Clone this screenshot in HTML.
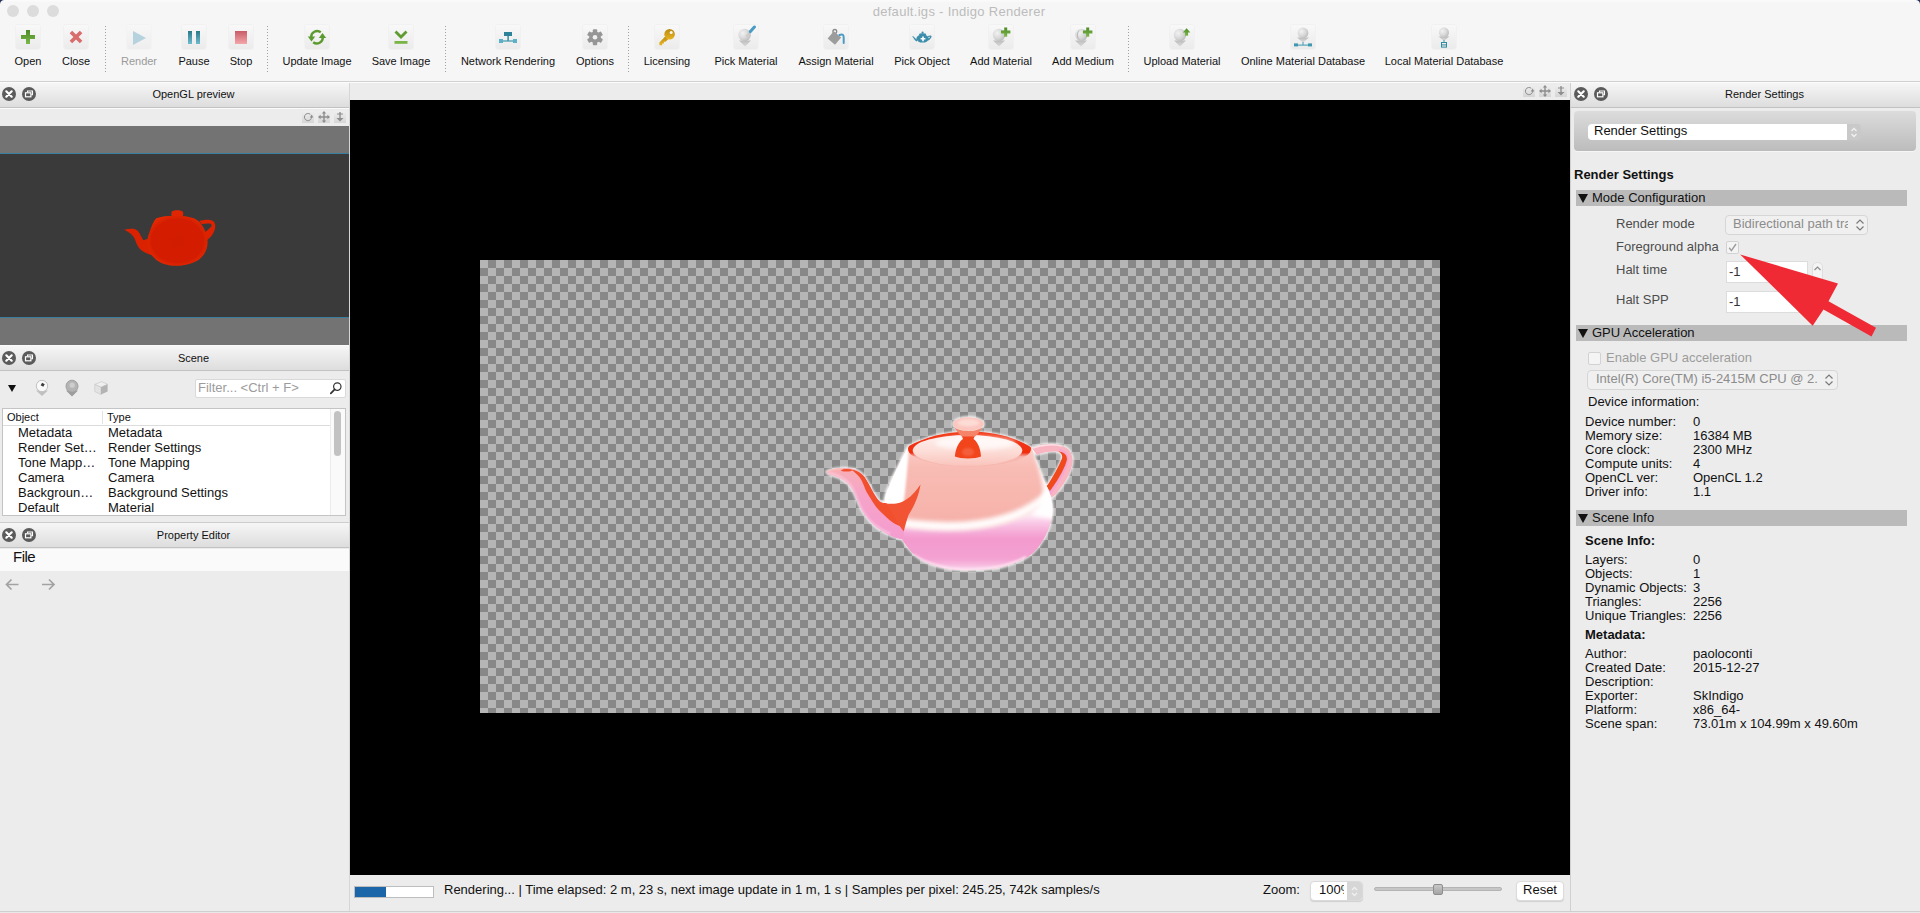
<!DOCTYPE html>
<html lang="en">
<head>
<meta charset="utf-8">
<title>default.igs - Indigo Renderer</title>
<style>
*{box-sizing:border-box;margin:0;padding:0}
html,body{width:1920px;height:913px;overflow:hidden;background:#ececec}
body{position:relative;font-family:"Liberation Sans",sans-serif;font-size:13px;color:#111;-webkit-font-smoothing:antialiased}
.a{position:absolute}
.t{position:absolute;white-space:nowrap;line-height:16px}
.c{text-align:center}
/* toolbar */
#tb{left:0;top:0;width:1920px;height:81px;background:#f6f6f6}
#tbline{left:0;top:81px;width:1920px;height:1px;background:#d1d1d1}
#tbline2{left:0;top:82px;width:1920px;height:1px;background:#fbfbfb}
.tl{position:absolute;top:53px;height:16px;line-height:16px;font-size:11px;text-align:center;white-space:nowrap;color:#111}
.sep{position:absolute;top:26px;height:46px;width:1px;background:repeating-linear-gradient(#a2a2a2 0 1px,transparent 1px 3px)}
.ib{position:absolute;top:25px;width:24px;height:24px;border-radius:2px;background:linear-gradient(#f8f8f8,#ebebeb);box-shadow:0 0 0 1px rgba(0,0,0,0.02)}
.ib svg{position:absolute;left:0;top:0}
/* dock titles */
.dt{position:absolute;height:25px;background:linear-gradient(#f6f6f6,#dddddd);border-bottom:1px solid #c2c2c2;font-size:11px;line-height:22px;text-align:center;color:#111}
.db{position:absolute;width:14px;height:14px;border-radius:7px;background:#5b5b5b}
.secbar{position:absolute;left:1576px;width:331px;height:16px;background:#bababa}
.secbar span{position:absolute;left:16px;top:0;line-height:15px;font-size:13px;color:#111;white-space:nowrap}
.secbar i{position:absolute;left:2px;top:4px;width:0;height:0;border-left:5.5px solid transparent;border-right:5.5px solid transparent;border-top:9px solid #111}
.k{position:absolute;left:1585px;white-space:nowrap;font-size:13px;line-height:14px;color:#111}
.v{position:absolute;left:1693px;white-space:nowrap;font-size:13px;line-height:14px;color:#111}
.lb{position:absolute;left:1616px;white-space:nowrap;font-size:13px;line-height:16px;color:#4c4c4c}
.row{position:absolute;left:18px;font-size:13px;line-height:15px;white-space:nowrap;color:#111}
.row2{position:absolute;left:108px;font-size:13px;line-height:15px;white-space:nowrap;color:#111}
</style>
</head>
<body>
<!-- ===== TITLE + TOOLBAR ===== -->
<div id="tb" class="a"></div>
<div id="tbline" class="a"></div>
<div id="tbline2" class="a"></div>
<div class="a" style="left:0;top:0;width:1920px;height:3px;background:linear-gradient(#fbfbfb,#f6f6f6)"></div>
<div class="a" style="left:0;top:0;width:4px;height:4px;background:radial-gradient(circle at 100% 100%,rgba(34,46,88,0) 3.400px,#222e58 4.400px)"></div>
<div class="a" style="left:1916px;top:0;width:4px;height:4px;background:radial-gradient(circle at 0 100%,rgba(34,46,88,0) 3.400px,#222e58 4.400px)"></div>
<div class="a" style="left:7px;top:5px;width:12px;height:12px;border-radius:6px;background:#dcdcdc"></div>
<div class="a" style="left:27px;top:5px;width:12px;height:12px;border-radius:6px;background:#dcdcdc"></div>
<div class="a" style="left:47px;top:5px;width:12px;height:12px;border-radius:6px;background:#dcdcdc"></div>
<div class="t c" style="left:759px;top:4px;width:400px;font-size:13px;color:#bcbcbc;letter-spacing:0.3px">default.igs - Indigo Renderer</div>
<!--TB-START-->
<svg width="0" height="0" style="position:absolute">
<defs>
<linearGradient id="gG" x1="0" y1="0" x2="0" y2="1"><stop offset="0" stop-color="#4c8a26"/><stop offset="1" stop-color="#7cb84a"/></linearGradient>
<linearGradient id="gT" x1="0" y1="0" x2="0" y2="1"><stop offset="0" stop-color="#2a7888"/><stop offset="1" stop-color="#70bcd0"/></linearGradient>
<linearGradient id="gR" x1="0" y1="0" x2="0" y2="1"><stop offset="0" stop-color="#c85c66"/><stop offset="1" stop-color="#f4a6aa"/></linearGradient>
<linearGradient id="gY" x1="0" y1="0" x2="0" y2="1"><stop offset="0" stop-color="#b98a10"/><stop offset="1" stop-color="#e8b422"/></linearGradient>
<radialGradient id="gS" cx="0.35" cy="0.35" r="0.75"><stop offset="0" stop-color="#f2f2f2"/><stop offset="0.55" stop-color="#d8d8d8"/><stop offset="1" stop-color="#b8b8b8"/></radialGradient>
<linearGradient id="gP" x1="0" y1="0" x2="0" y2="1"><stop offset="0" stop-color="#b4b4b4"/><stop offset="1" stop-color="#dadada"/></linearGradient>
</defs>
</svg>
<div class="ib" style="left:16px"><svg width="24" height="24" viewBox="0 0 24 24"><path d="M10 5h4v5h5v4h-5v5h-4v-5H5v-4h5z" fill="url(#gG)"/></svg></div>
<div class="tl" style="left:-52px;width:160px">Open</div>
<div class="ib" style="left:64px"><svg width="24" height="24" viewBox="0 0 24 24"><path d="M10.2 4.8h3.6v5.4h5.4v3.6h-5.4v5.4h-3.6v-5.4H4.800v-3.600h5.400z" fill="#d96c6c" transform="rotate(45 12 12)"/></svg></div>
<div class="tl" style="left:-4px;width:160px">Close</div>
<div class="sep" style="left:105px"></div>
<div class="ib" style="left:127px;opacity:.7"><svg width="24" height="24" viewBox="0 0 24 24"><path d="M6 6L19 13L6 20z" fill="#9cc4d4"/></svg></div>
<div class="tl" style="left:59px;width:160px;color:#9a9a9a">Render</div>
<div class="ib" style="left:182px"><svg width="24" height="24" viewBox="0 0 24 24"><rect x="6" y="6" width="4" height="13" fill="url(#gT)"/><rect x="14" y="6" width="4" height="13" fill="url(#gT)"/></svg></div>
<div class="tl" style="left:114px;width:160px">Pause</div>
<div class="ib" style="left:229px"><svg width="24" height="24" viewBox="0 0 24 24"><rect x="6" y="6" width="12" height="13" fill="url(#gR)"/></svg></div>
<div class="tl" style="left:161px;width:160px">Stop</div>
<div class="sep" style="left:267px"></div>
<div class="ib" style="left:305px"><svg width="24" height="24" viewBox="0 0 24 24"><g fill="none" stroke="#5a9a2e" stroke-width="2.4"><path d="M6.200 12.500A6 6 0 0 1 15.800 7.300"/><path d="M17.800 12A6 6 0 0 1 8.200 17.200"/></g><path d="M2.800 11.500h7.400l-3.700 5z" fill="#5a9a2e"/><path d="M13.800 13l3.700-5l3.700 5z" fill="#5a9a2e"/></svg></div>
<div class="tl" style="left:237px;width:160px">Update Image</div>
<div class="ib" style="left:389px"><svg width="24" height="24" viewBox="0 0 24 24"><path d="M5.500 7.500l2-2 4.500 4.500 4.500-4.500 2 2-6.500 6.500z" fill="#5e9c30"/><rect x="5.500" y="16" width="13" height="2.800" fill="#78b446"/></svg></div>
<div class="tl" style="left:321px;width:160px">Save Image</div>
<div class="sep" style="left:445px"></div>
<div class="ib" style="left:496px"><svg width="24" height="24" viewBox="0 0 24 24"><rect x="8" y="7" width="8" height="4" fill="#2b8299"/><rect x="11.400" y="11" width="1.400" height="5" fill="#2b8299"/><rect x="5" y="15.400" width="14" height="1.200" fill="#3f98b0"/><rect x="3" y="14" width="4" height="4" fill="#5cb0c8"/><rect x="17" y="14" width="4" height="4" fill="#5cb0c8"/></svg></div>
<div class="tl" style="left:428px;width:160px">Network Rendering</div>
<div class="ib" style="left:583px"><svg width="24" height="24" viewBox="0 0 24 24"><g transform="translate(12 12.200)"><g fill="#969696"><circle r="5.800"/><rect x="-2.200" y="-8" width="4.400" height="16" rx="1"/><rect x="-2.200" y="-8" width="4.400" height="16" rx="1" transform="rotate(60)"/><rect x="-2.200" y="-8" width="4.400" height="16" rx="1" transform="rotate(120)"/></g><circle r="2.300" fill="#f1f1f1"/></g></svg></div>
<div class="tl" style="left:515px;width:160px">Options</div>
<div class="sep" style="left:628px"></div>
<div class="ib" style="left:655px"><svg width="24" height="24" viewBox="0 0 24 24"><path d="M11.200 10.600L4.400 17.400v2.800h2.800v-1.700h1.700v-1.700h1.700l2.600-2.600z" fill="url(#gY)"/><circle cx="14.600" cy="9.300" r="5.300" fill="url(#gY)"/><circle cx="16.200" cy="7.600" r="1.500" fill="#f4f4f4"/></svg></div>
<div class="tl" style="left:587px;width:160px">Licensing</div>
<div class="ib" style="left:734px"><svg width="24" height="24" viewBox="0 0 24 24"><path d="M5 15.500h4v-2h4v2h4l-6 6z" fill="url(#gP)"/><circle cx="10.600" cy="10" r="6.200" fill="url(#gS)"/><path d="M12.200 11.600l5.400-6.600" stroke="#c9c9c9" stroke-width="1.600" fill="none"/><path d="M16.400 6.600l4-4.600" stroke="#4a9cc4" stroke-width="3" stroke-linecap="round" fill="none"/></svg></div>
<div class="tl" style="left:666px;width:160px">Pick Material</div>
<div class="ib" style="left:824px"><svg width="24" height="24" viewBox="0 0 24 24"><circle cx="10.800" cy="6.400" r="1.900" fill="none" stroke="#8a8a8a" stroke-width="1.300"/><rect x="5.600" y="8.200" width="9.600" height="9.600" fill="#9c9c9c" transform="rotate(40 10.400 13)"/><path d="M15.500 10c3-1.500 4.300 0 4.200 3v5" stroke="#4a9cc4" stroke-width="2" fill="none" stroke-linecap="round"/></svg></div>
<div class="tl" style="left:756px;width:160px">Assign Material</div>
<div class="ib" style="left:910px"><svg width="24" height="24" viewBox="0 0 24 24"><g fill="#3c8eac"><ellipse cx="12.600" cy="13.600" rx="6.200" ry="4"/><ellipse cx="12.600" cy="9.600" rx="3.600" ry="1.400"/><circle cx="12.600" cy="7.600" r="1.100"/><path d="M7 14.500c-2-.5-2.500-3-4.300-3.400l-.3 1c1.600.6 1.600 3.600 4.600 4.400z"/></g><path d="M18 11.500c2.500-.8 3.500-.5 2.600.9-.8 1.300-2 2.400-3 2.600" fill="none" stroke="#3c8eac" stroke-width="1.300"/><path d="M12.200 11.400h1.600v1.600h1.600v1.600h-1.600v1.600h-1.600v-1.600h-1.600v-1.600h1.600z" fill="#fff"/></svg></div>
<div class="tl" style="left:842px;width:160px">Pick Object</div>
<div class="ib" style="left:989px"><svg width="24" height="24" viewBox="0 0 24 24"><path d="M4 15.500h4v-2h4v2h4l-6 6z" fill="url(#gP)"/><circle cx="10" cy="10" r="6.200" fill="url(#gS)"/><path d="M15.200 2.400h3v3.200h3.200v3h-3.200v3.200h-3V8.600H12v-3h3.200z" fill="url(#gG)"/></svg></div>
<div class="tl" style="left:921px;width:160px">Add Material</div>
<div class="ib" style="left:1071px"><svg width="24" height="24" viewBox="0 0 24 24"><path d="M4 15.500h4v-2h4v2h4l-6 6z" fill="url(#gP)"/><circle cx="10.400" cy="10" r="6.200" fill="url(#gS)"/><path d="M9 5a5.500 5.500 0 0 0 0 10a7 7 0 0 1 0-10z" fill="#aaa" opacity=".7"/><path d="M15.200 2.400h3v3.200h3.200v3h-3.200v3.200h-3V8.600H12v-3h3.200z" fill="url(#gG)"/></svg></div>
<div class="tl" style="left:1003px;width:160px">Add Medium</div>
<div class="sep" style="left:1128px"></div>
<div class="ib" style="left:1170px"><svg width="24" height="24" viewBox="0 0 24 24"><path d="M4 15.500h4v-2h4v2h4l-6 6z" fill="url(#gP)"/><circle cx="10" cy="10" r="6.200" fill="url(#gS)"/><path d="M16.600 3.200l3.800 4.200h-2.300v3.400h-3V7.400h-2.300z" fill="url(#gG)"/></svg></div>
<div class="tl" style="left:1102px;width:160px">Upload Material</div>
<div class="ib" style="left:1291px"><svg width="24" height="24" viewBox="0 0 24 24"><path d="M6 12.500h4v-1.500h4v1.500h4l-6 5z" fill="url(#gP)"/><circle cx="12" cy="8" r="5.400" fill="url(#gS)"/><rect x="4" y="19.600" width="16" height="1" fill="#3f98b0"/><rect x="11.500" y="17" width="1" height="3" fill="#3f98b0"/><rect x="3" y="18.400" width="4" height="3" fill="#3f98b0"/><rect x="17" y="18.400" width="4" height="3" fill="#3f98b0"/></svg></div>
<div class="tl" style="left:1223px;width:160px">Online Material Database</div>
<div class="ib" style="left:1432px"><svg width="24" height="24" viewBox="0 0 24 24"><path d="M6.500 11.500h4v-1.500h3v1.500h4l-5.500 4.500z" fill="url(#gP)"/><circle cx="12" cy="7.600" r="5" fill="url(#gS)"/><rect x="11.500" y="15" width="1" height="3" fill="#3f98b0"/><rect x="9.500" y="17.500" width="5" height="4.600" fill="none" stroke="#2f8aa4" stroke-width="1"/><rect x="9.500" y="19.400" width="5" height="1" fill="#2f8aa4"/></svg></div>
<div class="tl" style="left:1364px;width:160px">Local Material Database</div>
<!--TB-END-->
<!-- ===== LEFT DOCK ===== -->
<!--LEFT-START-->
<!-- dock title: OpenGL preview -->
<div class="dt" style="left:0;top:83px;width:349px;padding-left:38px">OpenGL preview</div>
<div class="a" style="left:0;top:108px;width:349px;height:1px;background:#fafafa"></div>
<div class="db" style="left:2px;top:87px"><svg width="14" height="14" viewBox="0 0 14 14" class="a" style="left:0;top:0"><path d="M4.300 4.300l5.400 5.400M9.700 4.300l-5.400 5.400" stroke="#fff" stroke-width="2.200" stroke-linecap="round"/></svg></div>
<div class="db" style="left:22px;top:87px"><svg width="14" height="14" viewBox="0 0 14 14" class="a" style="left:0;top:0"><path d="M5.500 5.300V4h5v3.600H9.400" fill="none" stroke="#fff" stroke-width="1.100"/><rect x="3.500" y="5.800" width="5.400" height="4" fill="none" stroke="#fff" stroke-width="1.200"/></svg></div>
<!-- small view icons -->
<div class="a" style="left:302px;top:111px;width:12px;height:12px;background:linear-gradient(#efefef,#d6d6d6)"><svg width="12" height="12" viewBox="0 0 12 12" class="a" style="left:0;top:0"><path d="M8.300 3.300A3.600 3.600 0 1 0 9.600 6" fill="none" stroke="#8e8e8e" stroke-width="1"/><path d="M7.800 6.400h3.600l-1.800-2.800z" fill="#8e8e8e"/></svg></div>
<div class="a" style="left:318px;top:111px;width:12px;height:12px;background:linear-gradient(#efefef,#d6d6d6)"><svg width="12" height="12" viewBox="0 0 12 12" class="a" style="left:0;top:0"><path d="M6 0l2.200 2.600H6.700v2.700h2.700V3.800L12 6 9.400 8.200V6.700H6.700v2.700h1.500L6 12 3.800 9.400h1.500V6.700H2.600v1.500L0 6l2.600-2.200v1.500h2.700V2.600H3.800z" fill="#8e8e8e"/></svg></div>
<div class="a" style="left:334px;top:111px;width:12px;height:12px;background:linear-gradient(#efefef,#d6d6d6)"><svg width="12" height="12" viewBox="0 0 12 12" class="a" style="left:0;top:0"><path d="M3 2.600h6v1H3zM5.300 1h1.400v6h2.800L6 10.600 2.500 7h2.800z" fill="#8e8e8e"/></svg></div>
<!-- GL view -->
<div class="a" style="left:0;top:126px;width:349px;height:219px;background:#737373"></div>
<div class="a" style="left:0;top:153px;width:349px;height:165px;background:#3a3a3a;border-top:1px solid #3b7f9f;border-bottom:1px solid #3b7f9f"></div>
<svg class="a" style="left:110px;top:195px" width="130" height="90" viewBox="110 195 130 90">
<defs><radialGradient id="rt" cx="0.5" cy="0.5" r="0.55"><stop offset="0" stop-color="#d21e00"/><stop offset="0.8" stop-color="#d41f00"/><stop offset="1" stop-color="#ea2a04"/></radialGradient><filter id="gb" x="-10%" y="-10%" width="120%" height="120%"><feGaussianBlur stdDeviation="0.45"/></filter></defs>
<g filter="url(#gb)">
<path d="M124.300 229.700C128 228.700 131.500 228.500 134.600 229C137 230 138.500 231.500 139.600 233.400C141 236 142.300 238.500 143.500 240.300L150 238L153 256C152.500 255.800 152 255.500 151.400 255.100C149 254.300 146.500 253.400 144.500 252.200C142 250.800 140 249.300 138.600 247.200C136.800 244.500 135.800 241.500 134.600 238.400C133.300 236 131.800 234.300 129.700 232.900C128 231.600 126 230.500 124.300 229.700Z" fill="#da2200"/>
<path d="M199.200 221.100C202 220.200 205.500 219.600 208.600 219.800C210.800 220 212.500 220.600 213.500 221.600C214.800 223 215.400 224.600 215.300 226.500C215 229.500 214 232 212.500 234.400C211 236.500 209.400 238 207.600 239.400L205.500 244L203.500 233.500L205.100 232C207.500 230.200 209.800 228.300 211.500 226.500C212 225.200 211.300 224 210 223.600C207.300 223.200 204.500 223.500 201.700 224.100Z" fill="#de2400"/>
<path d="M156.300 218.200C161 216.500 167 215.700 175 215.700C183 215.700 189 216.500 193.800 218.200C196.500 219.500 199 221.300 200.700 223.600C203 226.500 204.600 229.500 205.600 232.500C206.800 235.800 207.500 239 207.600 242.300C207.600 246.300 206.500 250 204.600 253.200C202.700 256.300 200 259 196.700 261C193 263 189 264.300 184.900 265C181 265.700 177 266 173.100 265.800C169 265.500 165 264.500 161.300 263C157.800 261.300 154.700 259 152.400 256.100C149 252 147.300 246 147.500 240.300C147.700 237.500 148.300 235 149.400 232.500C150.300 229.800 151.200 227.200 152.400 224.600C153.300 222.200 154.600 220 156.300 218.200Z" fill="url(#rt)"/>
<path d="M171.600 216.300C171.400 214.500 171.300 213 171.600 212C172 210.900 174.500 210.300 177.300 210.300C180 210.300 182.600 210.900 183 212C183.300 213 183.200 214.500 183 216.300Z" fill="#e02602"/>
</g>
</svg>
<!-- dock title: Scene -->
<div class="a" style="left:0;top:345px;width:349px;height:1px;background:#fafafa"></div>
<div class="dt" style="left:0;top:346px;width:349px;padding-left:38px;line-height:24px">Scene</div>
<div class="db" style="left:2px;top:351px"><svg width="14" height="14" viewBox="0 0 14 14" class="a" style="left:0;top:0"><path d="M4.300 4.300l5.400 5.400M9.700 4.300l-5.400 5.400" stroke="#fff" stroke-width="2.200" stroke-linecap="round"/></svg></div>
<div class="db" style="left:22px;top:351px"><svg width="14" height="14" viewBox="0 0 14 14" class="a" style="left:0;top:0"><path d="M5.500 5.300V4h5v3.600H9.400" fill="none" stroke="#fff" stroke-width="1.100"/><rect x="3.500" y="5.800" width="5.400" height="4" fill="none" stroke="#fff" stroke-width="1.200"/></svg></div>
<!-- scene toolbar -->
<div class="a" style="left:8px;top:385px;width:0;height:0;border-left:4px solid transparent;border-right:4px solid transparent;border-top:7px solid #111"></div>
<svg class="a" style="left:34px;top:379px" width="16" height="18" viewBox="0 0 16 18"><path d="M2 11.500h3.500v-1h5v1H14L8 17z" fill="#c0c0c0"/><circle cx="8" cy="7" r="5.700" fill="#f9f9f9" stroke="#c2c2c2" stroke-width="1"/><rect x="7.200" y="4.200" width="3" height="3" fill="#3c3c3c" transform="rotate(30 8.700 5.700)"/></svg>
<svg class="a" style="left:64px;top:379px" width="16" height="18" viewBox="0 0 16 18"><path d="M2 11.500h3.500v-1h5v1H14L8 17.500z" fill="#9c9c9c"/><circle cx="8" cy="7.200" r="6" fill="#b4b4b4" stroke="#a0a0a0" stroke-width="1"/><circle cx="8.200" cy="6.200" r="2.600" fill="#cdcdcd"/></svg>
<svg class="a" style="left:93px;top:380px" width="16" height="16" viewBox="0 0 16 16"><path d="M1.800 4.400L8.600 1.600l6 2.600-6.600 3z" fill="#efefef" stroke="#c8c8c8" stroke-width=".7"/><path d="M1.800 4.400L8 7.200v7.400L1.800 11.600z" fill="#e2e2e2" stroke="#c8c8c8" stroke-width=".7"/><path d="M8 7.200l6.600-3v7.400L8 14.600z" fill="#b4b4b4"/></svg>
<!-- filter box -->
<div class="a" style="left:195px;top:379px;width:151px;height:19px;background:#fff;border:1px solid #d9d9d9;border-radius:2px"></div>
<div class="t" style="left:198px;top:380px;font-size:13px;color:#9c9c9c">Filter... &lt;Ctrl + F&gt;</div>
<svg class="a" style="left:329px;top:381px" width="14" height="14" viewBox="0 0 14 14"><circle cx="8.300" cy="5.600" r="3.700" fill="none" stroke="#333" stroke-width="1.200"/><path d="M5.700 8.300L1.800 12.400" stroke="#333" stroke-width="1.700" stroke-linecap="round"/></svg>
<!-- tree -->
<div class="a" style="left:2px;top:408px;width:344px;height:108px;background:#fff;border:1px solid #c4c4c4"></div>
<div class="a" style="left:3px;top:425px;width:328px;height:1px;background:#dcdcdc"></div>
<div class="a" style="left:102px;top:411px;width:1px;height:13px;background:#e2e2e2"></div>
<div class="a" style="left:330px;top:409px;width:1px;height:106px;background:#ececec"></div>
<div class="a" style="left:331px;top:409px;width:14px;height:106px;background:#fafafa"></div>
<div class="a" style="left:334px;top:411px;width:7px;height:45px;border-radius:4px;background:#c2c2c2"></div>
<div class="t" style="left:7px;top:409px;font-size:11px">Object</div>
<div class="t" style="left:107px;top:409px;font-size:11px">Type</div>
<div class="row" style="top:425px">Metadata</div><div class="row2" style="top:425px">Metadata</div>
<div class="row" style="top:440px">Render Set…</div><div class="row2" style="top:440px">Render Settings</div>
<div class="row" style="top:455px">Tone Mapp…</div><div class="row2" style="top:455px">Tone Mapping</div>
<div class="row" style="top:470px">Camera</div><div class="row2" style="top:470px">Camera</div>
<div class="row" style="top:485px">Backgroun…</div><div class="row2" style="top:485px">Background Settings</div>
<div class="row" style="top:500px">Default</div><div class="row2" style="top:500px">Material</div>
<!-- dock title: Property Editor -->
<div class="a" style="left:0;top:522px;width:349px;height:1px;background:#cdcdcd"></div>
<div class="dt" style="left:0;top:523px;width:349px;padding-left:38px;line-height:24px">Property Editor</div>
<div class="db" style="left:2px;top:528px"><svg width="14" height="14" viewBox="0 0 14 14" class="a" style="left:0;top:0"><path d="M4.300 4.300l5.400 5.400M9.700 4.300l-5.400 5.400" stroke="#fff" stroke-width="2.200" stroke-linecap="round"/></svg></div>
<div class="db" style="left:22px;top:528px"><svg width="14" height="14" viewBox="0 0 14 14" class="a" style="left:0;top:0"><path d="M5.500 5.300V4h5v3.600H9.400" fill="none" stroke="#fff" stroke-width="1.100"/><rect x="3.500" y="5.800" width="5.400" height="4" fill="none" stroke="#fff" stroke-width="1.200"/></svg></div>
<div class="a" style="left:0;top:549px;width:349px;height:22px;background:#fafafa"></div>
<div class="t" style="left:13px;top:547px;font-size:15px;line-height:20px;letter-spacing:-0.5px">File</div>
<svg class="a" style="left:4px;top:577px" width="56" height="16" viewBox="0 0 56 16"><g fill="none" stroke="#a2a2a2" stroke-width="1.700"><path d="M2.500 7.500h12M7.500 2.500L2.500 7.500l5 5"/><path d="M38 7.500h12M45 2.500l5 5-5 5"/></g></svg>
<!-- dock separators -->
<div class="a" style="left:349px;top:83px;width:1px;height:830px;background:#d6d6d6"></div>
<!--LEFT-END-->
<!-- ===== CENTER ===== -->
<!--CENTER-START-->
<div class="a" style="left:350px;top:83px;width:1220px;height:17px;background:#ececec"></div>
<div class="a" style="left:350px;top:100px;width:1220px;height:775px;background:#000"></div>
<div class="a" style="left:480px;top:260px;width:960px;height:453px;background:conic-gradient(#888 25%,#b5b5b5 0 50%,#888 0 75%,#b5b5b5 0) 0 0/16px 16px"></div>
<!-- view icons -->
<div class="a" style="left:1523px;top:85px;width:12px;height:12px;background:linear-gradient(#efefef,#d6d6d6)"><svg width="12" height="12" viewBox="0 0 12 12" class="a" style="left:0;top:0"><path d="M8.300 3.300A3.600 3.600 0 1 0 9.600 6" fill="none" stroke="#8e8e8e" stroke-width="1"/><path d="M7.800 6.400h3.600l-1.800-2.800z" fill="#8e8e8e"/></svg></div>
<div class="a" style="left:1539px;top:85px;width:12px;height:12px;background:linear-gradient(#efefef,#d6d6d6)"><svg width="12" height="12" viewBox="0 0 12 12" class="a" style="left:0;top:0"><path d="M6 0l2.200 2.600H6.700v2.700h2.700V3.800L12 6 9.400 8.200V6.700H6.700v2.700h1.500L6 12 3.800 9.400h1.500V6.700H2.600v1.500L0 6l2.600-2.200v1.500h2.700V2.600H3.800z" fill="#8e8e8e"/></svg></div>
<div class="a" style="left:1555px;top:85px;width:12px;height:12px;background:linear-gradient(#efefef,#d6d6d6)"><svg width="12" height="12" viewBox="0 0 12 12" class="a" style="left:0;top:0"><path d="M3 2.600h6v1H3zM5.300 1h1.400v6h2.800L6 10.600 2.500 7h2.800z" fill="#8e8e8e"/></svg></div>
<!-- rendered teapot -->
<svg class="a" style="left:800px;top:400px" width="300" height="190" viewBox="800 400 300 190">
<defs>
<filter id="b05" x="-20%" y="-20%" width="140%" height="140%"><feGaussianBlur stdDeviation="0.6"/></filter>
<filter id="bl1" x="-20%" y="-20%" width="140%" height="140%"><feGaussianBlur stdDeviation="1.100"/></filter>
<filter id="bl2" x="-30%" y="-30%" width="160%" height="160%"><feGaussianBlur stdDeviation="2.200"/></filter>
<filter id="bl4" x="-40%" y="-40%" width="180%" height="180%"><feGaussianBlur stdDeviation="4"/></filter>
<linearGradient id="lowG" gradientUnits="userSpaceOnUse" x1="0" y1="515" x2="0" y2="571"><stop offset="0" stop-color="#fde8f4"/><stop offset="0.2" stop-color="#f8bce0"/><stop offset="0.42" stop-color="#f39ace"/><stop offset="0.8" stop-color="#f4a2d2"/><stop offset="1" stop-color="#fbd8ee"/></linearGradient><linearGradient id="upG" gradientUnits="userSpaceOnUse" x1="0" y1="440" x2="0" y2="520"><stop offset="0" stop-color="#fbd2cc"/><stop offset="0.35" stop-color="#f8bcb4"/><stop offset="1" stop-color="#f6b2aa"/></linearGradient>
<linearGradient id="rimG" x1="0" y1="0" x2="0" y2="1"><stop offset="0" stop-color="#f23a1a"/><stop offset="0.6" stop-color="#f02e10"/><stop offset="0.72" stop-color="#f7b8b0"/><stop offset="1" stop-color="#f7b8b0"/></linearGradient>
<linearGradient id="lidG" x1="0" y1="0" x2="0" y2="1"><stop offset="0" stop-color="#fef0ee"/><stop offset="0.55" stop-color="#fcdcd6"/><stop offset="1" stop-color="#f9c4bc"/></linearGradient>
<linearGradient id="spG" x1="0" y1="0" x2="0" y2="1"><stop offset="0" stop-color="#f8b0b4"/><stop offset="0.35" stop-color="#f6a4c8"/><stop offset="1" stop-color="#f49cd0"/></linearGradient>
<path id="bodyP" d="M908.400 446.300C925 437 945 432 968 431.500C992 431.500 1015 437 1031.200 447.200C1034 455 1040 472 1046.100 484.500C1050 493 1052.800 502 1052.600 510.500C1052.400 520 1048 533 1040.500 544C1035 552 1030 556 1023.800 559C1012 564.500 1004 567 995.900 568.300C985 570 970 570.500 958.600 570C948 569.500 940 567.500 931.700 564.500C923 561 917 557.500 913 553.400C908 548 904 543 902 538.500C893 528 885 514 884.200 503.100C884.500 497 886 492 888.900 486.300C892 478 895 472 898.200 465.900C902 458 905 452 908.400 446.300Z"/>
<path id="spoutP" d="M826.500 471.400C831 469.300 836 468.200 842.300 468.100C848 467.800 852 468.200 855.400 469.600C859.500 471.500 862.500 474 864.700 477C867.500 481 870 486 872.100 490C874.500 494.500 877 498.500 879.600 501.200C881.500 502.600 883.500 503 885.200 503.100L903 510L904 539.500C902 539.500 900 539.200 898.200 538.500C893 537 889 535.200 885.200 532.900C879 529.500 874 526 870.300 521.700C866 517 863 512.500 861 508.700C858 503 856 497 853.500 491.900C851 487 848 483.500 844.200 480.800C840 478 836 476.500 831.200 475.200C829 474.500 827 473 826.500 471.400Z"/>
<path id="handleP" d="M1032.200 448.200C1036 446.200 1040 445 1044.300 444.400C1050 443.700 1056 443.900 1061 445.400C1065.500 446.700 1068.500 448.800 1070.300 451.900C1072 455 1072.900 458.500 1072.600 462.100C1072 468 1069.500 474 1066.600 478.900C1063 485 1059 490.500 1055.400 494.700L1051.700 497.500L1046.500 486C1047 485.500 1047.500 485 1048 484.500C1053 476.500 1058.500 467 1062 458.400C1062.800 455.500 1061.500 453 1059.200 451.900C1052 450.800 1044 452.200 1036.800 454.700Z"/>
<clipPath id="bodyC"><use href="#bodyP"/></clipPath>
<clipPath id="spoutC"><use href="#spoutP"/></clipPath>
<clipPath id="handleC"><use href="#handleP"/></clipPath>
</defs>
<!-- white halo -->
<g filter="url(#bl1)" fill="#fff" stroke="#fff" stroke-width="2.200" stroke-linejoin="round" opacity=".9"><use href="#bodyP"/><use href="#spoutP"/><use href="#handleP"/><ellipse cx="968.400" cy="424" rx="15.400" ry="6.800"/></g>
<!-- handle -->
<use href="#handleP" fill="#f8b4c0"/>
<g clip-path="url(#handleC)">
<path d="M1060 449C1067 451 1070 456 1068 463C1065 474 1056 488 1049 497L1046 488C1052 480 1060 467 1063.500 458C1064.500 454 1062 451 1058 450Z" fill="#f6a6d2" filter="url(#b05)"/>
<path d="M1059 451.500C1065.500 452.500 1068 456.500 1066.500 461.500C1063.500 471 1056 483 1050 491L1046 486C1052 477 1058 467 1061.500 458.500C1062.500 455.500 1061 453.500 1058 452.500Z" fill="#f04a1c" filter="url(#b05)"/>
<path d="M1033 448C1042 444.500 1054 444 1062 446" fill="none" stroke="#fde0e4" stroke-width="1.600" filter="url(#b05)"/>
</g>
<!-- body -->
<use href="#bodyP" fill="url(#upG)"/>
<g clip-path="url(#bodyC)">
<!-- lower pink -->
<path d="M880 523C905 527 935 530 965 529C1000 527 1030 517 1056 494L1060 575L880 575Z" fill="url(#lowG)" filter="url(#bl2)"/>
<!-- white band -->
<path d="M880 519C905 524.500 935 527.500 965 526C1000 523.500 1028 514 1052 492" fill="none" stroke="#fff" stroke-width="9" filter="url(#bl2)" opacity=".95"/>
<!-- right white highlight -->
<path d="M1034 452C1038 466 1042 478 1043 490C1043 500 1038 508 1030 515L1060 520L1060 450Z" fill="#fff" filter="url(#bl2)" opacity=".95"/>
<!-- left white highlight -->
<path d="M909 446C908 462 906.500 478 905 492C904 500 903 506 902 510L880 512L880 470L905 440Z" fill="#fff" filter="url(#bl1)"/>
<!-- bottom rim light -->
<path d="M913 555C930 566 950 569.500 968 569.500C990 569.500 1012 565 1026 557" fill="none" stroke="#fde4f2" stroke-width="2.400" filter="url(#bl1)"/>
<!-- rim + lid -->
<ellipse cx="969.500" cy="449" rx="61.500" ry="17.800" fill="url(#rimG)" filter="url(#b05)"/>
<ellipse cx="967.500" cy="450.400" rx="54.800" ry="15.400" fill="url(#lidG)" filter="url(#b05)"/>
<ellipse cx="975" cy="443" rx="40" ry="7" fill="#fff" filter="url(#bl2)" opacity=".7"/>
</g>
<!-- spout -->
<use href="#spoutP" fill="url(#spG)"/>
<g clip-path="url(#spoutC)">
<path d="M851 469.500C856 470 861 472.500 864.700 477C867.500 481 870 486 872.100 490C874.500 494.500 877 498.500 879.600 501.200C881.500 502.600 883.500 503 885.200 503.100L906 508L905 528C899 526 895 524 891.700 521.700C888 519 885.500 516.500 883.300 514.300C881 512 879 510.500 877.700 508.700C875 505.500 873 502.500 871.200 499.400C869 496 867 493 865.600 490C863.500 484 861 478 857 474.500C855 472.500 853 471 851 469.500Z" fill="#f2502e" filter="url(#b05)"/><ellipse cx="846.500" cy="470.300" rx="5.500" ry="1.300" fill="#f2502e" filter="url(#b05)"/>
<path d="M828 472.500C838 475 846 479 851 486C856 494 858 504 863 512C868 520 878 529 890 534" fill="none" stroke="#fbd4e6" stroke-width="2" filter="url(#bl1)" opacity=".8"/>
<path d="M826 471C831 469 837 468 843 468" fill="none" stroke="#f9c0bc" stroke-width="3" filter="url(#b05)"/>
</g>
<g clip-path="url(#bodyC)">
<!-- spout shadow spike -->
<path d="M920.500 484.500C919 495 914.500 506 908.500 515C906.500 521 905 526 903.800 531.500C900 527 896 520 892 512C888 507 886 504.500 884 503C890 504.500 898 504 903 501.500C910 498 916 491.500 920.500 484.500Z" fill="#f25230" filter="url(#b05)"/>
</g>
<!-- knob -->
<path d="M961.500 431C961 435 962.500 437.500 963 439C958.500 442 955.500 449 954.900 456.500C960 459 976 459 981 456.500C980.500 449 978 442 973.500 439C974 437.500 975.500 435 975.500 431Z" fill="#f2441f" filter="url(#b05)"/>
<ellipse cx="968" cy="452" rx="6" ry="4" fill="#f66a48" filter="url(#bl1)" opacity=".7"/>
<ellipse cx="968.400" cy="424" rx="15.400" ry="6.800" fill="#fbc6be"/>
<ellipse cx="968.400" cy="422.800" rx="11" ry="3.600" fill="#fddcd6" filter="url(#bl1)"/>
<path d="M954.500 427.500C960 432 977 432 982.500 427.500C980 432 977 434.500 975 436.500L962 436.500C960 434.500 957 432 954.500 427.500Z" fill="#f58468" filter="url(#b05)"/>
</svg>
<!--CENTER-END-->
<!-- ===== RIGHT DOCK ===== -->
<!--RIGHT-START-->
<div class="a" style="left:1570px;top:83px;width:1px;height:830px;background:#d0d0d0"></div>
<div class="dt" style="left:1571px;top:83px;width:349px;padding-left:38px">Render Settings</div>
<div class="db" style="left:1574px;top:87px"><svg width="14" height="14" viewBox="0 0 14 14" class="a" style="left:0;top:0"><path d="M4.300 4.300l5.400 5.400M9.700 4.300l-5.400 5.400" stroke="#fff" stroke-width="2.200" stroke-linecap="round"/></svg></div>
<div class="db" style="left:1594px;top:87px"><svg width="14" height="14" viewBox="0 0 14 14" class="a" style="left:0;top:0"><path d="M5.500 5.300V4h5v3.600H9.400" fill="none" stroke="#fff" stroke-width="1.100"/><rect x="3.500" y="5.800" width="5.400" height="4" fill="none" stroke="#fff" stroke-width="1.200"/></svg></div>
<!-- selector group -->
<div class="a" style="left:1574px;top:111px;width:342px;height:40px;border-radius:4px;background:linear-gradient(#dcdcdc,#bcbcbc);box-shadow:0 1px 0 #f6f6f6"></div>
<div class="a" style="left:1588px;top:124px;width:273px;height:16px;border-radius:4px;background:#c9c9c9"></div>
<div class="a" style="left:1588px;top:124px;width:259px;height:16px;border-radius:4px 0 0 4px;background:#fff"></div>
<svg class="a" style="left:1849px;top:126px" width="10" height="13" viewBox="0 0 10 13"><path d="M2.500 5L5 2.500 7.500 5M2.500 8L5 10.500 7.500 8" fill="none" stroke="#f2f2f2" stroke-width="1.300"/></svg>
<div class="t" style="left:1594px;top:123px">Render Settings</div>
<div class="t" style="left:1574px;top:167px;font-weight:bold">Render Settings</div>
<!-- Mode configuration -->
<div class="secbar" style="top:190px"><i></i><span>Mode Configuration</span></div>
<div class="lb" style="top:216px">Render mode</div>
<div class="a" style="left:1725px;top:215px;width:143px;height:20px;border-radius:4px;background:#f0f0f0;border:1px solid #d6d6d6"></div>
<div class="t" style="left:1733px;top:216px;width:115px;overflow:hidden;color:#8c8c8c">Bidirectional path tracing</div>
<svg class="a" style="left:1855px;top:218px" width="10" height="14" viewBox="0 0 10 14"><path d="M1.500 5.500L5 2l3.500 3.500M1.500 8.500L5 12l3.500-3.500" fill="none" stroke="#7a7a7a" stroke-width="1.200"/></svg>
<div class="lb" style="top:239px">Foreground alpha</div>
<div class="a" style="left:1726px;top:241px;width:13px;height:13px;border-radius:2px;background:#f4f4f4;border:1px solid #d2d2d2"></div>
<svg class="a" style="left:1726px;top:241px" width="13" height="13" viewBox="0 0 13 13"><path d="M3.200 6.800l2.200 2.800 4.600-6.600" fill="none" stroke="#9c9c9c" stroke-width="1.400"/></svg>
<div class="lb" style="top:262px">Halt time</div>
<div class="a" style="left:1726px;top:261px;width:82px;height:22px;background:#fff;border:1px solid #dcdcdc"></div>
<div class="t" style="left:1729px;top:264px;color:#333">-1</div>
<div class="a" style="left:1812px;top:262px;width:11px;height:21px;border-radius:5px;background:#f4f4f4;border:1px solid #dedede"></div>
<svg class="a" style="left:1813px;top:264px" width="9" height="8" viewBox="0 0 9 8"><path d="M1.500 6L4.500 3l3 3" fill="none" stroke="#8c8c8c" stroke-width="1.200"/></svg>
<div class="lb" style="top:292px">Halt SPP</div>
<div class="a" style="left:1726px;top:291px;width:82px;height:22px;background:#fff;border:1px solid #dcdcdc"></div>
<div class="t" style="left:1729px;top:294px;color:#333">-1</div>
<!-- GPU -->
<div class="secbar" style="top:325px"><i></i><span>GPU Acceleration</span></div>
<div class="a" style="left:1588px;top:352px;width:13px;height:13px;border-radius:2px;background:#f4f4f4;border:1px solid #d2d2d2"></div>
<div class="t" style="left:1606px;top:350px;color:#9c9c9c">Enable GPU acceleration</div>
<div class="a" style="left:1587px;top:370px;width:251px;height:20px;border-radius:4px;background:#f0f0f0;border:1px solid #d6d6d6"></div>
<div class="t" style="left:1596px;top:371px;color:#8c8c8c">Intel(R) Core(TM) i5-2415M CPU @ 2.</div>
<svg class="a" style="left:1824px;top:373px" width="10" height="14" viewBox="0 0 10 14"><path d="M1.500 5.500L5 2l3.500 3.500M1.500 8.500L5 12l3.500-3.500" fill="none" stroke="#7a7a7a" stroke-width="1.200"/></svg>
<div class="t" style="left:1588px;top:394px">Device information:</div>
<div class="k" style="top:415px">Device number:</div><div class="v" style="top:415px">0</div>
<div class="k" style="top:429px">Memory size:</div><div class="v" style="top:429px">16384 MB</div>
<div class="k" style="top:443px">Core clock:</div><div class="v" style="top:443px">2300 MHz</div>
<div class="k" style="top:457px">Compute units:</div><div class="v" style="top:457px">4</div>
<div class="k" style="top:471px">OpenCL ver:</div><div class="v" style="top:471px">OpenCL 1.2</div>
<div class="k" style="top:485px">Driver info:</div><div class="v" style="top:485px">1.1</div>
<!-- Scene info -->
<div class="secbar" style="top:510px"><i></i><span>Scene Info</span></div>
<div class="k" style="top:534px;font-weight:bold">Scene Info:</div>
<div class="k" style="top:553px">Layers:</div><div class="v" style="top:553px">0</div>
<div class="k" style="top:567px">Objects:</div><div class="v" style="top:567px">1</div>
<div class="k" style="top:581px">Dynamic Objects:</div><div class="v" style="top:581px">3</div>
<div class="k" style="top:595px">Triangles:</div><div class="v" style="top:595px">2256</div>
<div class="k" style="top:609px">Unique Triangles:</div><div class="v" style="top:609px">2256</div>
<div class="k" style="top:628px;font-weight:bold">Metadata<span>:</span></div>
<div class="k" style="top:647px">Author:</div><div class="v" style="top:647px">paoloconti</div>
<div class="k" style="top:661px">Created Date:</div><div class="v" style="top:661px">2015-12-27</div>
<div class="k" style="top:675px">Description:</div>
<div class="k" style="top:689px">Exporter:</div><div class="v" style="top:689px">SkIndigo</div>
<div class="k" style="top:703px">Platform:</div><div class="v" style="top:703px">x86_64-</div>
<div class="k" style="top:717px">Scene span:</div><div class="v" style="top:717px">73.01m x 104.99m x 49.60m</div>
<!-- red annotation arrow -->
<svg class="a" style="left:1730px;top:245px" width="160" height="100" viewBox="1730 245 160 100"><path d="M1740.200 254.400L1838 283.500L1828.500 301.300L1876 327.700L1871.500 336.400L1823.500 309.600L1812.700 325.700Z" fill="#f02a35"/></svg>
<!--RIGHT-END-->
<!-- ===== STATUS ===== -->
<!--STATUS-START-->
<div class="a" style="left:350px;top:875px;width:1220px;height:36px;background:#ececec"></div>
<div class="a" style="left:0;top:911px;width:1920px;height:1px;background:#cfcfcf"></div>
<div class="a" style="left:0;top:912px;width:1920px;height:1px;background:#e8e8e8"></div>
<div class="a" style="left:354px;top:886px;width:80px;height:12px;background:#fff;border:1px solid #bdbdbd"></div>
<div class="a" style="left:355px;top:887px;width:31px;height:10px;background:#1a66a8"></div>
<div class="t" style="left:444px;top:882px">Rendering... | Time elapsed: 2 m, 23 s, next image update in 1 m, 1 s | Samples per pixel: 245.25, 742k samples/s</div>
<div class="t" style="left:1263px;top:882px">Zoom:</div>
<div class="a" style="left:1310px;top:881px;width:53px;height:20px;background:#fff;border:1px solid #dadada;border-radius:4px;overflow:hidden;box-shadow:0 1px 1px rgba(0,0,0,.12)"><div class="a" style="left:36px;top:-1px;width:17px;height:20px;background:#d6d6d6"></div><svg class="a" style="left:39px;top:3px" width="9" height="13" viewBox="0 0 9 13"><path d="M2 5l2.500-2.500L7 5M2 8l2.500 2.500L7 8" fill="none" stroke="#f0f0f0" stroke-width="1.400"/></svg><div class="t" style="left:8px;top:0;width:25px;overflow:hidden">100%</div></div>
<div class="a" style="left:1374px;top:887px;width:128px;height:4px;background:#c6c6c6;border:1px solid #b4b4b4;border-radius:2px"></div>
<div class="a" style="left:1433px;top:884px;width:10px;height:11px;background:linear-gradient(#c8c8c8,#a4a4a4);border:1px solid #8e8e8e;border-radius:2px"></div>
<div class="a c" style="left:1516px;top:881px;width:48px;height:20px;background:#fff;border:1px solid #dcdcdc;border-radius:4px;line-height:16px;font-size:13px;box-shadow:0 1px 1px rgba(0,0,0,.12)">Reset</div>
<!--STATUS-END-->
</body>
</html>
